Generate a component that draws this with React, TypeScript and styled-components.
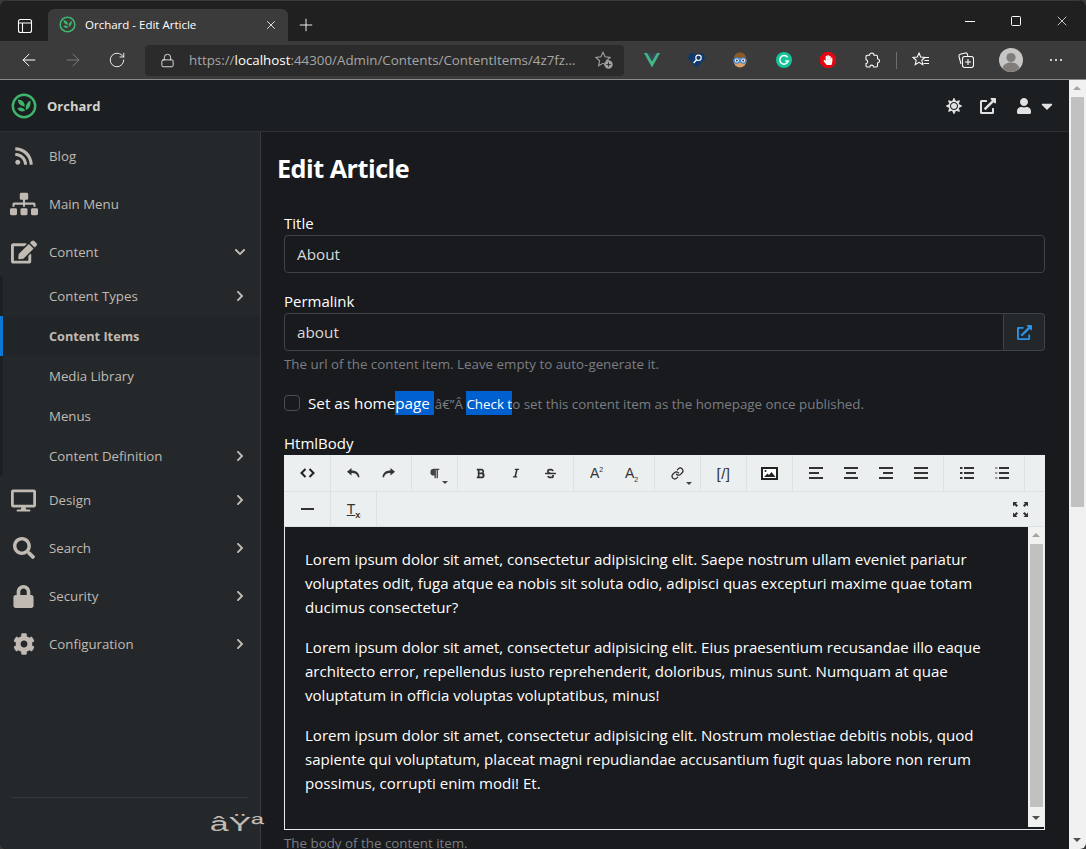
import React from 'react';
import styled, { createGlobalStyle } from 'styled-components';
import {
  FaBold,
  FaCaretDown,
  FaChevronDown,
  FaChevronRight,
  FaCog,
  FaDesktop,
  FaEdit,
  FaExternalLinkAlt,
  FaHandPaper,
  FaItalic,
  FaLock,
  FaParagraph,
  FaRss,
  FaSearch,
  FaSitemap,
  FaStrikethrough,
  FaSun,
  FaUser,
} from 'react-icons/fa';
import { ArrowLeft, ArrowRight, Link, Lock, Plus, RotateCw, X } from 'lucide-react';

const sans = `"Open Sans", "Noto Sans", sans-serif`;

const GlobalStyle = createGlobalStyle`
  html, body {
    margin: 0;
    padding: 0;
    background: #3a3a3a;
    overflow: hidden;
  }
  * {
    box-sizing: border-box;
  }
`;

const OrchardLogo = ({ size }: { size: number }) => (
  <svg width={size} height={size} viewBox="0 0 26 26">
    <circle cx="13" cy="13" r="11.2" fill="none" stroke="#3fb46c" strokeWidth="2.4" />
    <path d="M6.800 6.600c4.200.3 6.800 2.400 7 6.800-4-.1-6.800-2.400-7-6.800z" fill="#3fb46c" />
    <path d="M19.300 7.400c.8 4.500-.7 8-4.400 9.600-.6-4 .8-7.500 4.400-9.600z" fill="#3fb46c" />
    <path d="M6.400 15.400c3-1.500 6-.9 7.800 2.300-3 1.500-6 .7-7.800-2.300z" fill="#3fb46c" />
  </svg>
);

const PanelIcon = () => (
  <svg width="16" height="16" viewBox="0 0 16 16" fill="none" stroke="#fff" strokeWidth="1.1">
    <rect x="1.500" y="1.500" width="13" height="13" rx="2" />
    <path d="M1.500 5h13M5.500 5v9.500" />
  </svg>
);

const StarPlus = () => (
  <svg width="20" height="20" viewBox="0 0 20 20" fill="none">
    <path d="M9 2.200l2.100 4.600 5 .6-3.700 3.400 1 5-4.400-2.500-4.400 2.500 1-5L1.900 7.400l5-.6z" stroke="#a0a0a0" strokeWidth="1.1" />
    <circle cx="14.500" cy="14.500" r="4.200" fill="#a0a0a0" />
    <path d="M14.500 12.300v4.400M12.300 14.500h4.400" stroke="#333" strokeWidth="1" />
  </svg>
);

const VueLogo = () => (
  <svg width="16" height="15" viewBox="0 0 16 15">
    <path d="M0 0h3.200L8 8.200 12.800 0H16L8 14.500z" fill="#41b883" />
    <path d="M3.200 0h2.600L8 3.800 10.200 0h2.600L8 8.200z" fill="#35495e" />
  </svg>
);

const HeartLens = () => (
  <svg width="17" height="16" viewBox="0 0 17 16">
    <path d="M8.500 15.500L1 8C-.8 5.600.4 1 4 1c2 0 3.400 1 4.500 2.400C9.600 2 11 1 13 1c3.600 0 4.800 4.600 3 7z" fill="#0f3a6b" />
    <circle cx="10.500" cy="5.800" r="2.700" fill="none" stroke="#fff" strokeWidth="1.1" />
    <path d="M8.600 7.800L5.600 11" stroke="#fff" strokeWidth="1.3" />
  </svg>
);

const GlassesFace = () => (
  <svg width="16" height="17" viewBox="0 0 16 17">
    <circle cx="8" cy="9" r="6.500" fill="#d9a06b" />
    <path d="M2 7c0-5 3-6.500 6-6.500S14 2 14 7c-3-.5-8-2-12 0z" fill="#8a5a2b" />
    <circle cx="4.800" cy="8.500" r="2.600" fill="#fff" stroke="#3b82d6" strokeWidth="1.2" />
    <circle cx="11.200" cy="8.500" r="2.600" fill="#fff" stroke="#3b82d6" strokeWidth="1.2" />
    <circle cx="4.800" cy="8.500" r="1" fill="#234" />
    <circle cx="11.200" cy="8.500" r="1" fill="#234" />
  </svg>
);

const GrammarlyLogo = () => (
  <svg width="16" height="16" viewBox="0 0 16 16">
    <circle cx="8" cy="8" r="8" fill="#15c39a" />
    <path d="M11.600 5.400A4.300 4.300 0 1 0 12.200 9H9.200" fill="none" stroke="#fff" strokeWidth="1.5" />
  </svg>
);

const PuzzleIcon = () => (
  <svg width="16" height="16" viewBox="0 0 16 16" fill="none" stroke="#fff" strokeWidth="1.05">
    <path d="M5.500 3.300C5.500 1.900 6.600 1 7.800 1s2.200.9 2.200 2.300h2.300c.7 0 1.200.5 1.200 1.200v2.300c1.200.1 2 1 2 2.100s-.8 2-2 2.100v2.800c0 .7-.5 1.200-1.200 1.200H9.600c-.1-1.200-.8-1.900-1.900-1.900s-1.800.7-1.900 1.900H3.200c-.7 0-1.200-.5-1.200-1.200v-2.200c1.100-.1 1.700-.9 1.700-1.900S3.100 7.900 2 7.800V4.500c0-.7.500-1.200 1.200-1.200z" />
  </svg>
);

const FavoritesIcon = () => (
  <svg width="18" height="18" viewBox="0 0 18 18" fill="none" stroke="#fff" strokeWidth="1.05">
    <path d="M7 2l1.700 4 4.300.4-3.200 2.900 1 4.300L7 11.300 3.200 13.600l1-4.300L1 6.400 5.300 6z" />
    <path d="M12 6.500h5M12.500 9.500h4.500M11.500 12.500h5.500" />
  </svg>
);

const CollectionsIcon = () => (
  <svg width="18" height="18" viewBox="0 0 18 18" fill="none" stroke="#fff" strokeWidth="1.05">
    <path d="M4 13L2 5.500c-.3-1 .2-1.900 1.200-2.200l5-1.300c1-.3 1.900.3 2.200 1.200L10.800 5" />
    <rect x="5.500" y="5.500" width="11" height="11" rx="2.200" />
    <path d="M11 8v6M8 11h6" />
  </svg>
);

const AvatarIcon = () => (
  <svg width="24" height="24" viewBox="0 0 24 24">
    <circle cx="12" cy="12" r="12" fill="#c8c6c4" />
    <circle cx="12" cy="9.500" r="4.600" fill="#807d7a" />
    <path d="M3.500 20c1.200-4 4.600-5.400 8.500-5.400s7.300 1.400 8.500 5.400A12 12 0 0 1 12 24a12 12 0 0 1-8.500-4z" fill="#807d7a" />
  </svg>
);

const CodeIcon = () => (
  <svg width="15" height="10" viewBox="0 0 15 10" fill="none" stroke="#222" strokeWidth="2">
    <path d="M5.500 1L1.500 5l4 4M9.500 1l4 4-4 4" />
  </svg>
);

const UndoIcon = ({ flip }: { flip?: boolean }) => (
  <svg width="13" height="10" viewBox="0 0 13 10" style={flip ? { transform: 'scaleX(-1)' } : undefined}>
    <path d="M4.500 0L0 3.700l4.500 3.700V5c3.500-.2 5.700.9 6.700 4.500l1.300-.5C12 4.500 9 2.500 4.500 2.500z" fill="#333" />
  </svg>
);

const ImageIcon = () => (
  <svg width="17" height="13" viewBox="0 0 17 13">
    <rect x="1" y="1" width="15" height="11" fill="#fff" stroke="#222" strokeWidth="2" />
    <circle cx="4.500" cy="4" r="1" fill="#222" />
    <path d="M3 10l3.500-3.500 1.500 1.500 2.500-3L14.500 10z" fill="#222" />
  </svg>
);

const AlignIcon = ({ side }: { side: 'left' | 'center' | 'right' | 'full' }) => {
  const midX = { left: 0, center: 2, right: 4, full: 0 }[side];
  const midWidth = side === 'full' ? 14 : 10;
  return (
    <svg width="14" height="12" viewBox="0 0 14 12" fill="#333">
      <rect x="0" y="0" width="14" height="2" />
      <rect x={midX} y="5" width={midWidth} height="2" />
      <rect x="0" y="10" width="14" height="2" />
    </svg>
  );
};

const ListIcon = ({ faint }: { faint?: boolean }) => (
  <svg width="14" height="12" viewBox="0 0 14 12">
    <path d="M0 0h2.500v2H0zM0 5h2.500v2H0zM0 10h2.500v2H0z" fill={faint ? '#999' : '#333'} />
    <path d="M4 0h10v2H4zM4 5h10v2H4zM4 10h10v2H4z" fill="#333" />
  </svg>
);

const FullscreenIcon = () => (
  <svg width="15" height="15" viewBox="0 0 15 15" fill="#333">
    <path d="M0 0h4.500L3 1.500l2 2L3.500 5l-2-2L0 4.500z" />
    <path d="M15 0h-4.500L12 1.500l-2 2L11.500 5l2-2L15 4.500z" />
    <path d="M0 15h4.500L3 13.500l2-2L3.500 10l-2 2L0 10.500z" />
    <path d="M15 15h-4.500l1.500-1.500-2-2 1.500-1.500 2 2 1.500-1.500z" />
  </svg>
);

const Window = styled.div`
  width: 1086px;
  height: 849px;
  display: flex;
  flex-direction: column;
  overflow: hidden;
  border-radius: 8px 8px 6px 6px;
  background: #202020;
  font-family: ${sans};
`;

const TabStrip = styled.div`
  height: 41px;
  flex: none;
  display: flex;
  align-items: flex-end;
  background: #202020;
  border-top: 1px solid #3a3a3a;
`;

const TabAction = styled.div`
  width: 48px;
  height: 31px;
  display: flex;
  align-items: center;
  justify-content: center;
  padding-left: 2px;
`;

const Tab = styled.div`
  width: 240px;
  height: 32px;
  display: flex;
  align-items: center;
  padding: 0 10px 1px 11px;
  background: #3b3b3b;
  border-radius: 6px 6px 0 0;
`;

const TabTitle = styled.span`
  flex: 1;
  margin-left: 9px;
  color: #fff;
  font-size: 11.5px;
`;

const NewTab = styled.div`
  width: 36px;
  height: 32px;
  display: flex;
  align-items: center;
  justify-content: center;
`;

const WindowControls = styled.div`
  margin-left: auto;
  margin-right: 1px;
  align-self: flex-start;
  display: flex;
`;

const WinButton = styled.div`
  width: 46px;
  height: 40px;
  display: flex;
  align-items: center;
  justify-content: center;
`;

const MinimizeBar = styled.div`
  width: 10px;
  height: 1px;
  background: #fff;
`;

const MaximizeBox = styled.div`
  width: 10px;
  height: 10px;
  border: 1px solid #fff;
  border-radius: 1.5px;
`;

const BrowserBar = styled.div`
  height: 39px;
  flex: none;
  display: flex;
  align-items: center;
  padding: 0 7px;
  background: #3b3b3b;
  border-bottom: 1px solid #8a8a8a;
`;

const NavButton = styled.div<{ $wide?: boolean }>`
  width: ${p => (p.$wide ? 45 : 44)}px;
  height: 30px;
  flex: none;
  display: flex;
  align-items: center;
  justify-content: center;
`;

const AddressBar = styled.div`
  width: 479px;
  height: 31px;
  display: flex;
  align-items: center;
  margin-left: 6px;
  padding: 0 10px 0 15px;
  background: #2b2b2b;
  border-radius: 4px;
`;

const Url = styled.div`
  flex: 1;
  margin-left: 14px;
  color: #a6a6a6;
  font-size: 13.35px;
  white-space: nowrap;
  overflow: hidden;

  strong {
    color: #fff;
    font-weight: 400;
  }
`;

const Extensions = styled.div`
  display: flex;
  align-items: center;
  margin-left: 6px;
`;

const StopSign = styled.div`
  width: 16px;
  height: 16px;
  display: flex;
  align-items: center;
  justify-content: center;
  background: #e30613;
  clip-path: polygon(30% 0, 70% 0, 100% 30%, 100% 70%, 70% 100%, 30% 100%, 0 70%, 0 30%);
`;

const BarDivider = styled.div`
  width: 1px;
  height: 17px;
  margin: 0 1px 0 2px;
  background: #6e6e6e;
`;

const Dots = styled.span`
  display: flex;
  gap: 3px;

  i {
    width: 2px;
    height: 2px;
    background: #fff;
    border-radius: 50%;
  }
`;

const Page = styled.div`
  flex: 1;
  min-height: 0;
  display: flex;
`;

const AppArea = styled.div`
  flex: 1;
  min-width: 0;
  display: flex;
  flex-direction: column;
`;

const Header = styled.header`
  height: 52px;
  flex: none;
  display: flex;
  align-items: center;
  justify-content: space-between;
  padding: 0 13px 0 11px;
  background: #1b1f21;
  border-bottom: 1px solid #2c3033;
`;

const Brand = styled.div`
  display: flex;
  align-items: center;
  gap: 10px;
`;

const BrandName = styled.span`
  color: #d5d2cc;
  font-size: 13px;
  font-weight: 700;
`;

const HeaderActions = styled.div`
  display: flex;
  align-items: center;
  gap: 18px;
  color: #e2e2e2;
`;

const UserMenu = styled.div`
  display: flex;
  align-items: center;
  gap: 6px;
  margin-left: 2px;
`;

const Columns = styled.div`
  flex: 1;
  min-height: 0;
  display: flex;
`;

const Sidebar = styled.aside`
  width: 261px;
  flex: none;
  display: flex;
  flex-direction: column;
  background: #24282a;
  border-right: 1px solid #373b3e;
`;

const NavList = styled.nav`
  flex: 1;
`;

const NavItem = styled.div`
  height: 48px;
  display: flex;
  align-items: center;
  padding-right: 14px;
  color: #c0bab3;
`;

const NavIcon = styled.div`
  width: 49px;
  flex: none;
  display: flex;
  align-items: center;
  justify-content: center;
  padding-right: 2px;
`;

const NavLabel = styled.span<{ $bold?: boolean }>`
  flex: 1;
  font-size: ${p => (p.$bold ? 12.7 : 13.25)}px;
`;

const SubItem = styled.div<{ $active?: boolean }>`
  height: 40px;
  display: flex;
  align-items: center;
  padding: 0 14px 0 46px;
  color: #c0bab3;
  font-weight: ${p => (p.$active ? 700 : 400)};
  border-left: 3px solid ${p => (p.$active ? '#0a78d4' : '#1d2022')};
  background: ${p => (p.$active ? '#212527' : 'transparent')};
`;

const SidebarFooter = styled.div`
  height: 52px;
  margin: 0 11px;
  display: flex;
  justify-content: flex-end;
  border-top: 1px solid #33373a;
`;

const Collapse = styled.span`
  display: inline-block;
  height: 24px;
  position: relative;
  z-index: 1;
  margin-right: -15px;
  margin-top: 14px;
  color: #c0bab3;
  font-family: "Liberation Sans", sans-serif;
  font-size: 20px;
  line-height: 24px;
  transform: scaleX(1.7);
  transform-origin: right center;
`;

const Content = styled.main`
  flex: 1;
  min-width: 0;
  background: #191a1d;
  padding: 16px 24px 0 16px;
`;

const Title = styled.h1`
  margin: 0 0 24px;
  color: #fff;
  font-size: 25.2px;
  font-weight: 700;
  line-height: 40px;
  letter-spacing: -0.5px;
`;

const Form = styled.div`
  padding-left: 7px;
  display: flex;
  flex-direction: column;
  gap: 17px;
`;

const Field = styled.div`
  display: flex;
  flex-direction: column;
`;

const Label = styled.div`
  color: #fff;
  font-size: 15px;
  line-height: 22px;
  margin-bottom: 1px;
`;

const TextBox = styled.div<{ $joined?: boolean }>`
  flex: ${p => (p.$joined ? 1 : 'none')};
  height: 38px;
  display: flex;
  align-items: center;
  padding: 0 12px;
  color: #d8d8d8;
  font-size: 15.3px;
  border: 1px solid #3e4246;
  border-radius: ${p => (p.$joined ? '4px 0 0 4px' : '4px')};
`;

const InputGroup = styled.div`
  display: flex;
`;

const AddonButton = styled.div`
  width: 41px;
  height: 38px;
  display: flex;
  align-items: center;
  justify-content: center;
  color: #2a93e8;
  background: #23272a;
  border: 1px solid #3e4246;
  border-left: none;
  border-radius: 0 4px 4px 0;
`;

const Hint = styled.div`
  margin-top: 3px;
  color: #7a7e82;
  font-size: 13.35px;
  line-height: 20px;
`;

const CheckRow = styled.div`
  height: 24px;
  display: flex;
  align-items: center;
`;

const CheckBox = styled.div`
  width: 16px;
  height: 16px;
  margin-right: 8px;
  border: 1px solid #4a4e52;
  border-radius: 4px;
`;

const CheckLabel = styled.span`
  color: #fff;
  font-size: 15.25px;
  line-height: 24px;
  white-space: pre;
`;

const Selected = styled.span`
  display: inline-block;
  background: #0060cf;
  white-space: pre;
`;

const CheckHint = styled.span`
  margin-left: -2.5px;
  padding-top: 1px;
  color: #7a7e82;
  font-size: 13.35px;
  line-height: 24px;
  white-space: pre;
`;

const SelectedSmall = styled.span`
  display: inline-block;
  height: 24px;
  margin-top: -1px;
  vertical-align: top;
  padding-top: 1px;
  color: #fff;
  background: #0060cf;
`;

const Editor = styled.div`
  display: flex;
  flex-direction: column;
  border-bottom: 1px solid #e9ecef;
  border-right: 1px solid #e9ecef;
`;

const ToolRow = styled.div<{ $last?: boolean }>`
  height: ${p => (p.$last ? 35 : 37)}px;
  display: flex;
  align-items: stretch;
  background: #ebeff0;
  border-bottom: 1px solid #dce2e4;
`;

const ToolGroup = styled.div<{ $first?: boolean }>`
  display: flex;
  padding: 0 5px 0 ${p => (p.$first ? 6 : 5)}px;
  border-right: 1px solid #dce2e4;
`;

const ToolButton = styled.div`
  width: 35px;
  display: flex;
  align-items: center;
  justify-content: center;
  color: #333;
`;

const Dropdown = styled.span`
  display: flex;
  align-items: center;
  position: relative;
`;

const MiniCaret = styled.span`
  position: absolute;
  left: 100%;
  bottom: -5px;
  margin-left: 2px;
  border: 3px solid transparent;
  border-top-color: #444;
  border-bottom: none;
`;

const Script = styled.span`
  color: #333;
  font-family: "Liberation Sans", sans-serif;
  font-size: 14px;

  sup,
  sub {
    font-size: 7px;
    line-height: 0;
  }
`;

const Shortcode = styled.span`
  color: #333;
  font-family: "Liberation Sans", sans-serif;
  font-size: 15px;
  letter-spacing: 0.5px;
`;

const HrGlyph = styled.span`
  width: 13px;
  height: 2px;
  background: #333;
`;

const ClearGlyph = styled.span`
  color: #333;
  font-family: "Liberation Sans", sans-serif;
  font-size: 14px;
  text-decoration: underline;

  sub {
    font-size: 9px;
    font-weight: 700;
    line-height: 0;
  }
`;

const FullscreenSlot = styled.div`
  margin-left: auto;
  width: 48px;
  display: flex;
  align-items: center;
  justify-content: center;
`;

const EditArea = styled.div`
  height: 302px;
  display: flex;
  padding-bottom: 2px;
  border-left: 1px solid #e9ecef;
  background: #191a1d;
`;

const EditText = styled.div`
  flex: 1;
  min-width: 0;
  padding: 20px 21px 0 20px;
  color: #fff;
  font-size: 15.07px;
  line-height: 24px;

  p {
    margin: 0 0 16px;
  }
`;

const ScrollTrack = styled.div<{ $narrow?: boolean }>`
  width: ${p => (p.$narrow ? 16 : 17)}px;
  flex: none;
  display: flex;
  flex-direction: column;
  background: #f1f1f1;
`;

const ArrowUp = styled.div`
  height: 17px;
  flex: none;
  position: relative;

  &::after {
    content: '';
    position: absolute;
    left: 4px;
    top: 6px;
    border: 4px solid transparent;
    border-top: none;
    border-bottom-color: #a3a3a3;
  }
`;

const ArrowDown = styled.div`
  height: 17px;
  flex: none;
  position: relative;

  &::after {
    content: '';
    position: absolute;
    left: 4px;
    top: 6px;
    border: 4px solid transparent;
    border-bottom: none;
    border-top-color: #505050;
  }
`;

const ThumbArea = styled.div`
  flex: 1;
  min-height: 0;
  padding-left: 2px;
`;

const Thumb = styled.div<{ $height: number }>`
  width: 13px;
  height: ${p => p.$height}px;
  background: #c1c1c1;
`;

const nav = [
  { label: 'Blog', icon: <FaRss size={20} /> },
  { label: 'Main Menu', icon: <FaSitemap size={28} /> },
  { label: 'Content', icon: <FaEdit size={26} />, open: true },
];

const navAfter = [
  { label: 'Design', icon: <FaDesktop size={25} /> },
  { label: 'Search', icon: <FaSearch size={22} /> },
  { label: 'Security', icon: <FaLock size={23} /> },
  { label: 'Configuration', icon: <FaCog size={22} /> },
];

const subNav = [
  { label: 'Content Types', more: true },
  { label: 'Content Items', active: true },
  { label: 'Media Library' },
  { label: 'Menus' },
  { label: 'Content Definition', more: true },
];

const extensions = [
  <VueLogo key="vue" />,
  <HeartLens key="heart" />,
  <GlassesFace key="face" />,
  <GrammarlyLogo key="grammarly" />,
  <StopSign key="adblock">
    <FaHandPaper size={10} color="#fff" />
  </StopSign>,
  <PuzzleIcon key="puzzle" />,
];

const toolbarGroups = [
  [<CodeIcon key="code" />],
  [<UndoIcon key="undo" />, <UndoIcon key="redo" flip />],
  [
    <Dropdown key="style">
      <FaParagraph size={11} color="#444" />
      <MiniCaret />
    </Dropdown>,
  ],
  [<FaBold key="b" size={11} />, <FaItalic key="i" size={10} />, <FaStrikethrough key="s" size={11} />],
  [
    <Script key="sup">
      A<sup>2</sup>
    </Script>,
    <Script key="sub">
      A<sub>2</sub>
    </Script>,
  ],
  [
    <Dropdown key="link">
      <Link size={13} color="#222" strokeWidth={2.2} />
      <MiniCaret />
    </Dropdown>,
  ],
  [<Shortcode key="shortcode">[/]</Shortcode>],
  [<ImageIcon key="image" />],
  [
    <AlignIcon key="l" side="left" />,
    <AlignIcon key="c" side="center" />,
    <AlignIcon key="r" side="right" />,
    <AlignIcon key="j" side="full" />,
  ],
  [<ListIcon key="ul" />, <ListIcon key="ol" faint />],
];

const paragraphs = [
  'Lorem ipsum dolor sit amet, consectetur adipisicing elit. Saepe nostrum ullam eveniet pariatur voluptates odit, fuga atque ea nobis sit soluta odio, adipisci quas excepturi maxime quae totam ducimus consectetur?',
  'Lorem ipsum dolor sit amet, consectetur adipisicing elit. Eius praesentium recusandae illo eaque architecto error, repellendus iusto reprehenderit, doloribus, minus sunt. Numquam at quae voluptatum in officia voluptas voluptatibus, minus!',
  'Lorem ipsum dolor sit amet, consectetur adipisicing elit. Nostrum molestiae debitis nobis, quod sapiente qui voluptatum, placeat magni repudiandae accusantium fugit quas labore non rerum possimus, corrupti enim modi! Et.',
];

function Scrollbar({ height, narrow }: { height: number; narrow?: boolean }) {
  return (
    <ScrollTrack $narrow={narrow}>
      <ArrowUp />
      <ThumbArea>
        <Thumb $height={height} />
      </ThumbArea>
      <ArrowDown />
    </ScrollTrack>
  );
}

export default function App() {
  return (
    <Window>
      <GlobalStyle />
      <TabStrip>
        <TabAction>
          <PanelIcon />
        </TabAction>
        <Tab>
          <OrchardLogo size={17} />
          <TabTitle>Orchard - Edit Article</TabTitle>
          <X size={14} color="#fff" strokeWidth={1.4} />
        </Tab>
        <NewTab>
          <Plus size={20} color="#fff" strokeWidth={1.1} />
        </NewTab>
        <WindowControls>
          <WinButton>
            <MinimizeBar />
          </WinButton>
          <WinButton>
            <MaximizeBox />
          </WinButton>
          <WinButton>
            <X size={16} color="#fff" strokeWidth={1.1} />
          </WinButton>
        </WindowControls>
      </TabStrip>

      <BrowserBar>
        <NavButton>
          <ArrowLeft size={20} color="#fff" strokeWidth={1.2} />
        </NavButton>
        <NavButton>
          <ArrowRight size={20} color="#7d7d7d" strokeWidth={1.2} />
        </NavButton>
        <NavButton>
          <RotateCw size={18} color="#fff" strokeWidth={1.2} />
        </NavButton>
        <AddressBar>
          <Lock size={15} color="#fff" strokeWidth={1.3} />
          <Url>
            https://<strong>localhost</strong>:44300/Admin/Contents/ContentItems/4z7fz...
          </Url>
          <StarPlus />
        </AddressBar>
        <Extensions>
          {extensions.map((icon, i) => (
            <NavButton key={i}>{icon}</NavButton>
          ))}
          <BarDivider />
          <NavButton $wide>
            <FavoritesIcon />
          </NavButton>
          <NavButton $wide>
            <CollectionsIcon />
          </NavButton>
          <NavButton $wide>
            <AvatarIcon />
          </NavButton>
          <NavButton $wide>
            <Dots>
              <i />
              <i />
              <i />
            </Dots>
          </NavButton>
        </Extensions>
      </BrowserBar>

      <Page>
        <AppArea>
          <Header>
            <Brand>
              <OrchardLogo size={26} />
              <BrandName>Orchard</BrandName>
            </Brand>
            <HeaderActions>
              <FaSun size={16} />
              <FaExternalLinkAlt size={16} />
              <UserMenu>
                <FaUser size={16} />
                <FaCaretDown size={18} />
              </UserMenu>
            </HeaderActions>
          </Header>
          <Columns>
            <Sidebar>
              <NavList>
                {nav.map(item => (
                  <NavItem key={item.label}>
                    <NavIcon>{item.icon}</NavIcon>
                    <NavLabel>{item.label}</NavLabel>
                    {item.open ? <FaChevronDown size={12} /> : null}
                  </NavItem>
                ))}
                {subNav.map(item => (
                  <SubItem key={item.label} $active={item.active}>
                    <NavLabel $bold={item.active}>{item.label}</NavLabel>
                    {item.more ? <FaChevronRight size={12} /> : null}
                  </SubItem>
                ))}
                {navAfter.map(item => (
                  <NavItem key={item.label}>
                    <NavIcon>{item.icon}</NavIcon>
                    <NavLabel>{item.label}</NavLabel>
                    <FaChevronRight size={12} />
                  </NavItem>
                ))}
              </NavList>
              <SidebarFooter>
                <Collapse>âŸª</Collapse>
              </SidebarFooter>
            </Sidebar>
            <Content>
              <Title>Edit Article</Title>
              <Form>
                <Field>
                  <Label>Title</Label>
                  <TextBox>About</TextBox>
                </Field>
                <Field>
                  <Label>Permalink</Label>
                  <InputGroup>
                    <TextBox $joined>about</TextBox>
                    <AddonButton>
                      <FaExternalLinkAlt size={15} />
                    </AddonButton>
                  </InputGroup>
                  <Hint>The url of the content item. Leave empty to auto-generate it.</Hint>
                </Field>
                <CheckRow>
                  <CheckBox />
                  <CheckLabel>
                    Set as home<Selected>page </Selected>
                  </CheckLabel>
                  <CheckHint>
                    {' '}
                    â€”Â <SelectedSmall>Check t</SelectedSmall>o set this content item as the homepage once published.
                  </CheckHint>
                </CheckRow>
                <Field>
                  <Label>HtmlBody</Label>
                  <Editor>
                    <ToolRow>
                      {toolbarGroups.map((group, i) => (
                        <ToolGroup key={i} $first={i === 0}>
                          {group.map((icon, j) => (
                            <ToolButton key={j}>{icon}</ToolButton>
                          ))}
                        </ToolGroup>
                      ))}
                    </ToolRow>
                    <ToolRow $last>
                      <ToolGroup $first>
                        <ToolButton>
                          <HrGlyph />
                        </ToolButton>
                      </ToolGroup>
                      <ToolGroup>
                        <ToolButton>
                          <ClearGlyph>
                            T<sub>x</sub>
                          </ClearGlyph>
                        </ToolButton>
                      </ToolGroup>
                      <FullscreenSlot>
                        <FullscreenIcon />
                      </FullscreenSlot>
                    </ToolRow>
                    <EditArea>
                      <EditText>
                        {paragraphs.map((text, i) => (
                          <p key={i}>{text}</p>
                        ))}
                      </EditText>
                      <Scrollbar height={263} narrow />
                    </EditArea>
                  </Editor>
                  <Hint>The body of the content item.</Hint>
                </Field>
              </Form>
            </Content>
          </Columns>
        </AppArea>
        <Scrollbar height={410} />
      </Page>
    </Window>
  );
}
